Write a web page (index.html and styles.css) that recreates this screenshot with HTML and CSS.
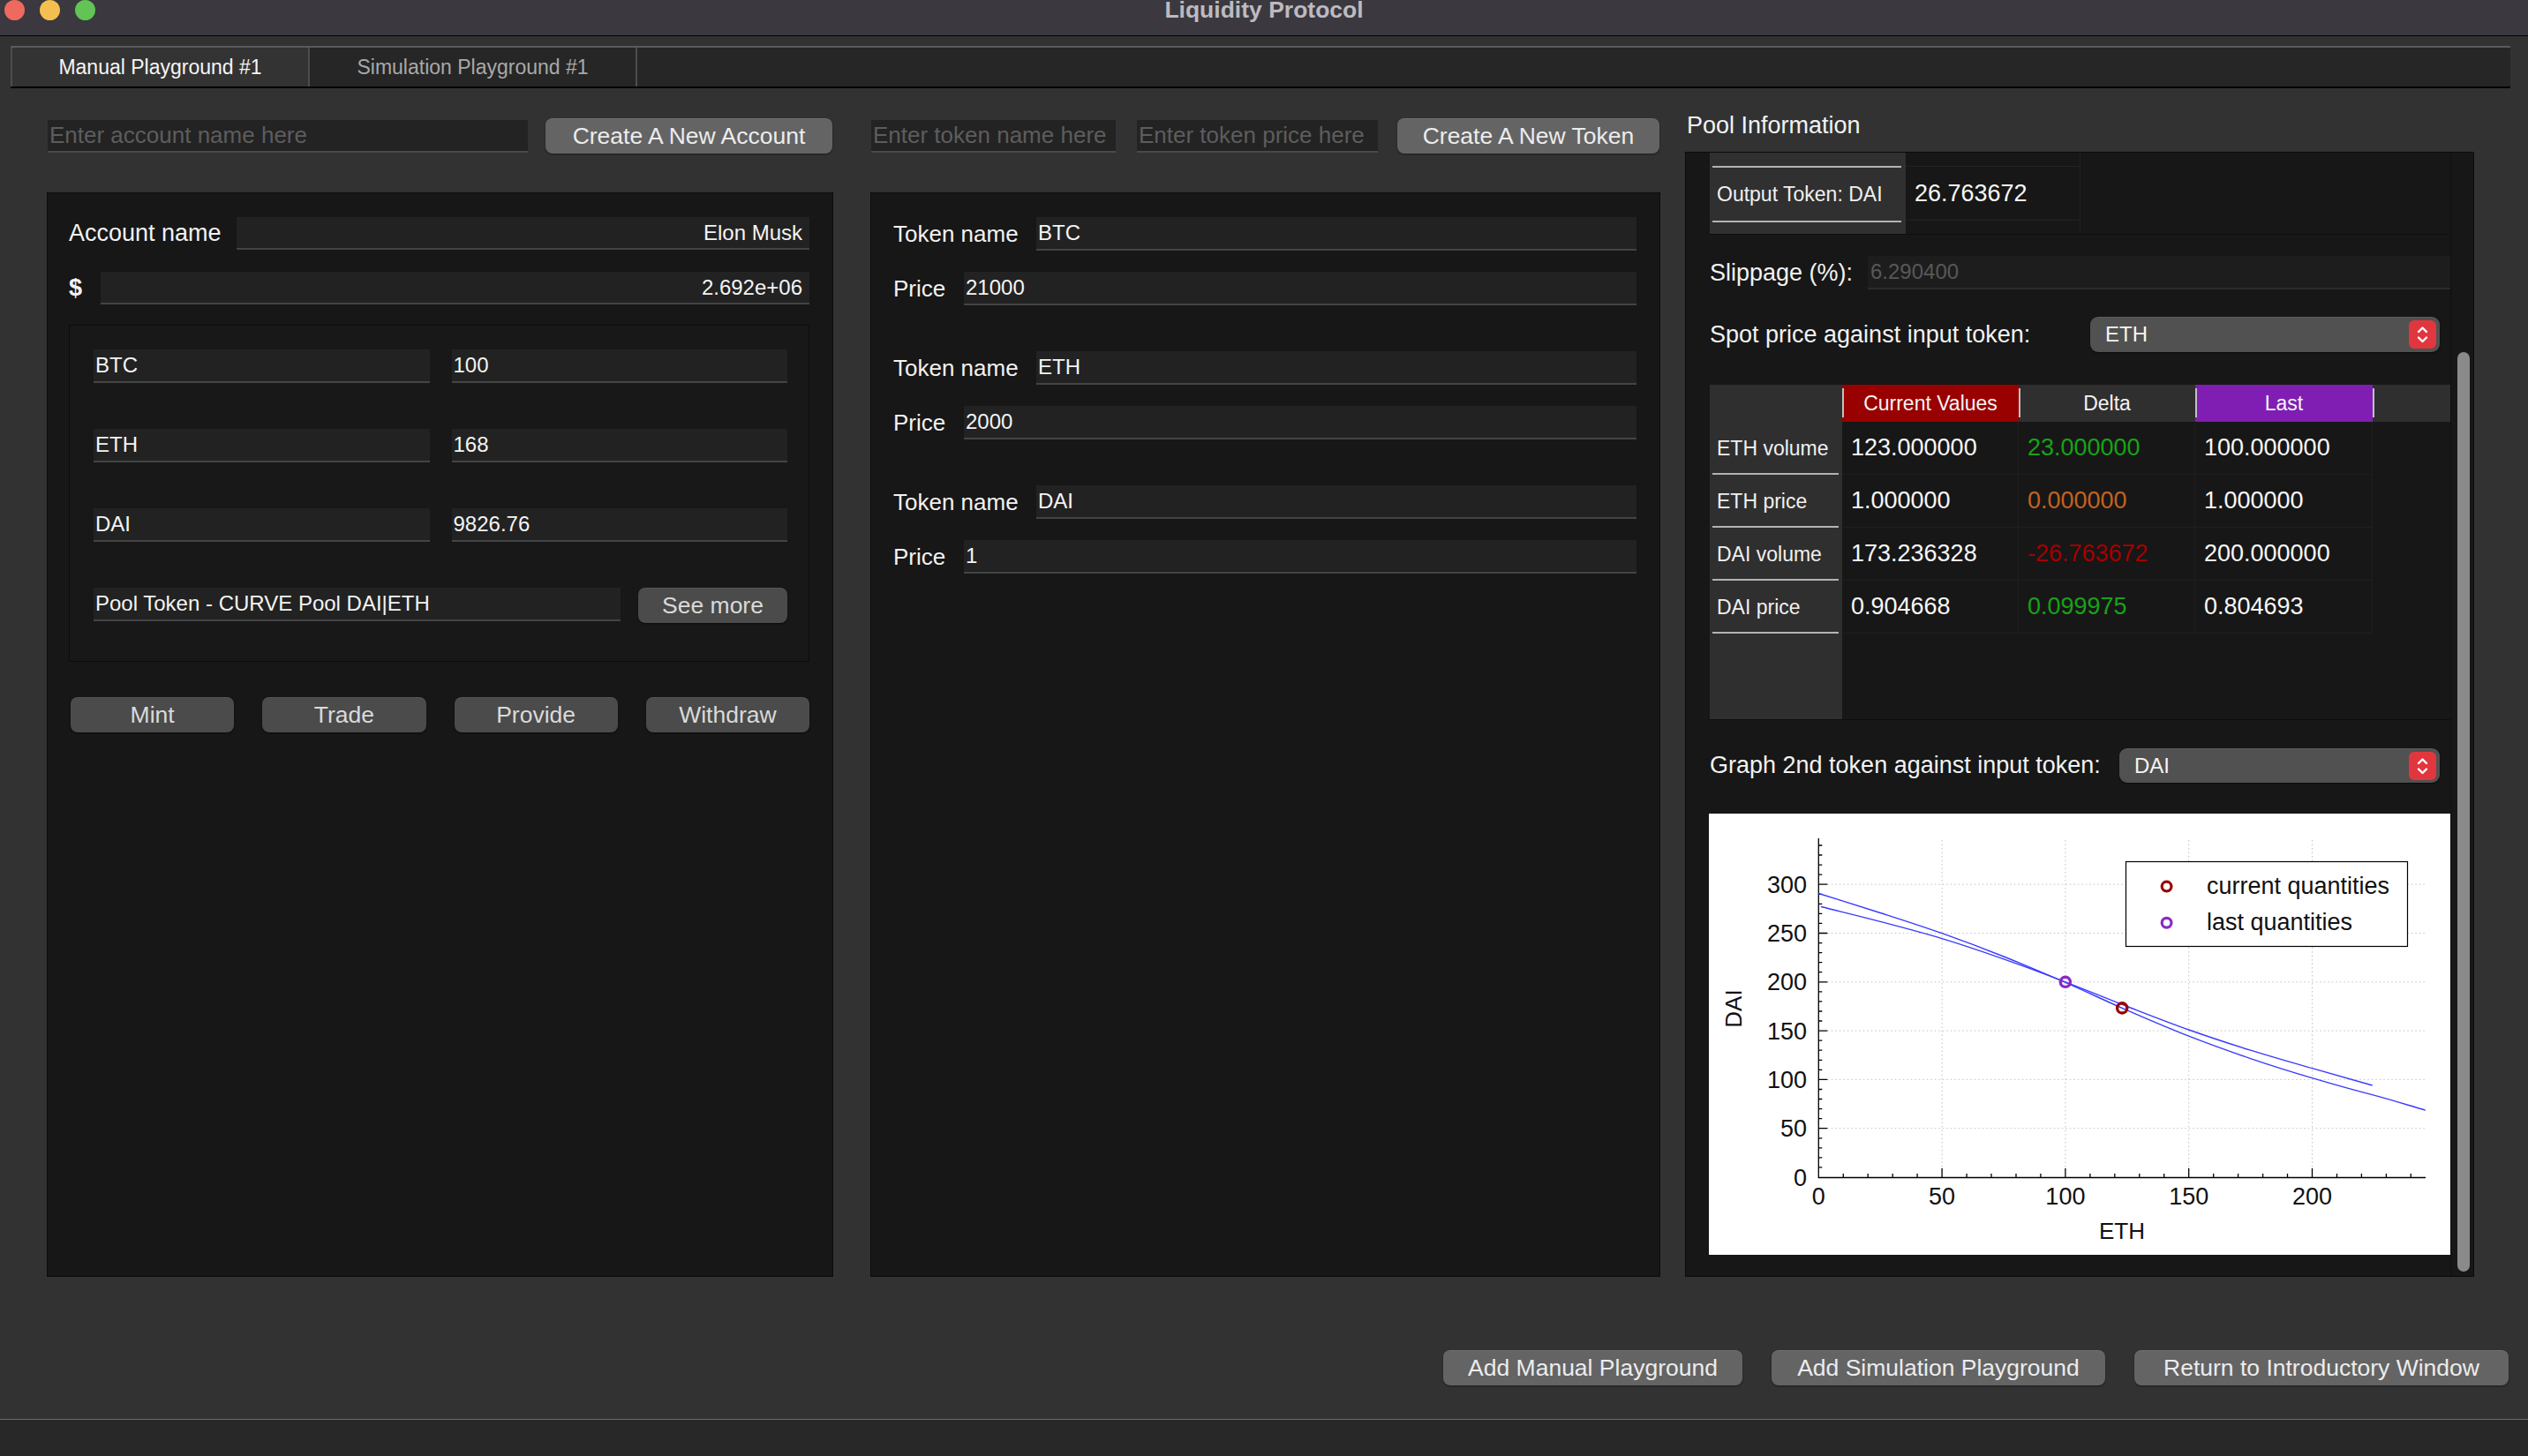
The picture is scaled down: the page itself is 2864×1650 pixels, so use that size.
FILE: index.html
```html
<!DOCTYPE html>
<html lang="en">
<head>
<meta charset="utf-8">
<title>Liquidity Protocol</title>
<link rel="stylesheet" href="styles.css">
</head>
<body>
<div class="window">
  <header class="titlebar">
    <div class="lights"><span class="light red"></span><span class="light yellow"></span><span class="light green"></span></div>
    <div class="title">Liquidity Protocol</div>
    <div class="title-spacer"></div>
  </header>

  <nav class="tabbar">
    <div class="tab tab-active">Manual Playground #1</div>
    <div class="tab tab-second">Simulation Playground #1</div>
  </nav>

  <main class="main">
    <section class="col col-left">
      <div class="toprow toprow-left">
        <div class="tfield w-account">Enter account name here</div>
        <button class="btn btn-light w-newacc">Create A New Account</button>
      </div>
      <div class="panel panel-left">
        <div class="frow">
          <span class="lbl lbl-account">Account name</span>
          <div class="field field-right">Elon Musk</div>
        </div>
        <div class="frow">
          <span class="lbl lbl-dollar">$</span>
          <div class="field field-right">2.692e+06</div>
        </div>
        <div class="group">
          <div class="grow"><div class="field">BTC</div><div class="field">100</div></div>
          <div class="grow"><div class="field">ETH</div><div class="field">168</div></div>
          <div class="grow"><div class="field">DAI</div><div class="field">9826.76</div></div>
          <div class="grow grow-pool"><div class="field">Pool Token - CURVE Pool DAI|ETH</div><button class="btn btn-dark">See more</button></div>
        </div>
        <div class="actions">
          <button class="btn btn-dark">Mint</button>
          <button class="btn btn-dark">Trade</button>
          <button class="btn btn-dark">Provide</button>
          <button class="btn btn-dark">Withdraw</button>
        </div>
      </div>
    </section>

    <section class="col col-mid">
      <div class="toprow toprow-mid">
        <div class="tfield w-tname">Enter token name here</div>
        <div class="tfield w-tprice">Enter token price here</div>
        <button class="btn btn-light w-newtok">Create A New Token</button>
      </div>
      <div class="panel panel-mid">
        <div class="tgroup">
          <div class="trow"><span class="lbl lbl-token">Token name</span><div class="field">BTC</div></div>
          <div class="trow trow-price"><span class="lbl lbl-price">Price</span><div class="field">21000</div></div>
        </div>
        <div class="tgroup">
          <div class="trow"><span class="lbl lbl-token">Token name</span><div class="field">ETH</div></div>
          <div class="trow trow-price"><span class="lbl lbl-price">Price</span><div class="field">2000</div></div>
        </div>
        <div class="tgroup">
          <div class="trow"><span class="lbl lbl-token">Token name</span><div class="field">DAI</div></div>
          <div class="trow trow-price"><span class="lbl lbl-price">Price</span><div class="field">1</div></div>
        </div>
      </div>
    </section>

    <section class="col col-right">
      <div class="pool-title">Pool Information</div>
      <div class="panel panel-right">
        <div class="viewport">
          <div class="otable">
            <div class="ovh">
              <div class="ovh-stub"></div>
              <div class="hline"></div>
              <div class="ovh-label">Output Token: DAI</div>
              <div class="hline"></div>
            </div>
            <div class="ocol">
              <div class="ocell-stub"></div>
              <div class="ocell">26.763672</div>
            </div>
            <div class="orest"></div>
          </div>

          <div class="prow prow-slip">
            <span class="lbl lbl-slip">Slippage (%):</span>
            <div class="field field-dim">6.290400</div>
          </div>

          <div class="prow prow-spot">
            <span class="lbl">Spot price against input token:</span>
            <div class="combo combo-spot">
              <span class="combo-text">ETH</span>
              <span class="stepper"><svg width="31" height="32" viewBox="0 0 31 32"><path d="M11 13l4.5-4.5L20 13M11 19.5l4.5 4.5L20 19.5" fill="none" stroke="#fff" stroke-width="2.4" stroke-linecap="round" stroke-linejoin="round"/></svg></span>
            </div>
          </div>

          <div class="vtable">
            <div class="vh vh-corner"></div>
            <div class="hc hc-red">Current Values</div>
            <div class="hc">Delta</div>
            <div class="hc hc-purple">Last</div>
            <div class="hc hc-filler"></div>

            <div class="vh vh-row">ETH volume</div>
            <div class="cell">123.000000</div>
            <div class="cell c-green">23.000000</div>
            <div class="cell">100.000000</div>
            <div class="empty"></div>

            <div class="vh vh-row">ETH price</div>
            <div class="cell">1.000000</div>
            <div class="cell c-orange">0.000000</div>
            <div class="cell">1.000000</div>
            <div class="empty"></div>

            <div class="vh vh-row">DAI volume</div>
            <div class="cell">173.236328</div>
            <div class="cell c-red">-26.763672</div>
            <div class="cell">200.000000</div>
            <div class="empty"></div>

            <div class="vh vh-row">DAI price</div>
            <div class="cell">0.904668</div>
            <div class="cell c-green">0.099975</div>
            <div class="cell">0.804693</div>
            <div class="empty"></div>

            <div class="vh vh-blank"></div>
            <div class="empty empty-wide"></div>
          </div>

          <div class="prow prow-graph">
            <span class="lbl">Graph 2nd token against input token:</span>
            <div class="combo combo-graph">
              <span class="combo-text">DAI</span>
              <span class="stepper"><svg width="31" height="32" viewBox="0 0 31 32"><path d="M11 13l4.5-4.5L20 13M11 19.5l4.5 4.5L20 19.5" fill="none" stroke="#fff" stroke-width="2.4" stroke-linecap="round" stroke-linejoin="round"/></svg></span>
            </div>
          </div>

          <div class="chart">
            <svg class="plot" width="842" height="500" viewBox="0 0 842 500">
              <rect width="842" height="500" fill="#ffffff"/>
              <g stroke="#c2c2c2" stroke-width="1" stroke-dasharray="1.5 3" fill="none">
                <path d="M264.1 30V402M403.9 30V402M543.7 30V402M683.5 30V402"/>
                <path d="M134.3 356.7H811M134.3 301.4H811M134.3 246.1H811M134.3 190.8H811M134.3 135.5H811M134.3 80.2H811"/>
              </g>
              <g stroke="#000" stroke-width="1.3" fill="none">
                <path d="M124.3 28V412.5H812"/>
                <path d="M124.3 400.9h4M124.3 389.9h4M124.3 378.8h4M124.3 367.8h4M124.3 345.6h4M124.3 334.6h4M124.3 323.5h4M124.3 312.5h4M124.3 290.3h4M124.3 279.3h4M124.3 268.2h4M124.3 257.2h4M124.3 235h4M124.3 224h4M124.3 212.9h4M124.3 201.9h4M124.3 179.7h4M124.3 168.7h4M124.3 157.6h4M124.3 146.6h4M124.3 124.4h4M124.3 113.4h4M124.3 102.3h4M124.3 91.3h4M124.3 69.1h4M124.3 58.1h4M124.3 47h4M124.3 36h4"/>
                <path d="M124.3 356.7h10M124.3 301.4h10M124.3 246.1h10M124.3 190.8h10M124.3 135.5h10M124.3 80.2h10"/>
                <path d="M152.3 412v-4M180.2 412v-4M208.2 412v-4M236.1 412v-4M292.1 412v-4M320 412v-4M348 412v-4M375.9 412v-4M431.9 412v-4M459.8 412v-4M487.8 412v-4M515.7 412v-4M571.7 412v-4M599.6 412v-4M627.6 412v-4M655.5 412v-4M711.5 412v-4M739.4 412v-4M767.4 412v-4M795.3 412v-4"/>
                <path d="M264.1 412v-10M403.9 412v-10M543.7 412v-10M683.5 412v-10"/>
              </g>
              <g stroke="#3b3bff" stroke-width="1.4" fill="none">
                <path d="M124.3 90.5C147.6 97.83 170.9 104.97 194.2 112.5C217.5 120.03 240.8 127.45 264.1 135.7C287.4 143.95 310.7 152.72 334 162C357.3 171.28 380.6 181.25 403.9 191.4C427.2 201.55 450.5 212.77 473.8 222.9C497.1 233.03 520.4 243.08 543.7 252.2C567 261.32 590.3 269.68 613.6 277.6C636.9 285.52 660.2 292.78 683.5 299.7C706.8 306.62 730.1 313.28 753.4 319.1C772.9 324.2 792.3 330.5 811.8 336.2"/>
                <path d="M127 105.5C149.6 111.2 170.9 116.27 194.2 122.4C217.5 128.53 240.8 134.53 264.1 141.6C287.4 148.67 310.7 156.6 334 164.8C357.3 173 380.6 181.85 403.9 190.8C427.2 199.75 450.5 209.47 473.8 218.5C497.1 227.53 520.4 236.72 543.7 245C567 253.28 590.3 260.92 613.6 268.2C636.9 275.48 660.2 282.07 683.5 288.7C706.2 295.33 729 301.57 751.7 308"/>
              </g>
              <circle cx="403.9" cy="190.8" r="5.6" fill="none" stroke="#8a2bc2" stroke-width="3.4"/>
              <circle cx="468.2" cy="220.4" r="5.6" fill="none" stroke="#9a0000" stroke-width="3.4"/>
              <g class="ticklbl" fill="#111" font-size="27">
                <text x="124.3" y="443" text-anchor="middle">0</text>
                <text x="264.1" y="443" text-anchor="middle">50</text>
                <text x="403.9" y="443" text-anchor="middle">100</text>
                <text x="543.7" y="443" text-anchor="middle">150</text>
                <text x="683.5" y="443" text-anchor="middle">200</text>
                <text x="111" y="421.5" text-anchor="end">0</text>
                <text x="111" y="366.2" text-anchor="end">50</text>
                <text x="111" y="310.9" text-anchor="end">100</text>
                <text x="111" y="255.6" text-anchor="end">150</text>
                <text x="111" y="200.3" text-anchor="end">200</text>
                <text x="111" y="145" text-anchor="end">250</text>
                <text x="111" y="89.7" text-anchor="end">300</text>
              </g>
              <text class="ticklbl" x="468" y="482" text-anchor="middle" font-size="26" fill="#111">ETH</text>
              <text class="ticklbl" transform="translate(37 221) rotate(-90)" text-anchor="middle" font-size="26" fill="#111">DAI</text>
              <rect x="472.5" y="54.5" width="319" height="96" fill="#fff" stroke="#000" stroke-width="1.2"/>
              <circle cx="518.6" cy="82.6" r="5.4" fill="none" stroke="#9a0000" stroke-width="3.2"/>
              <circle cx="518.6" cy="123.7" r="5.4" fill="none" stroke="#8a2bc2" stroke-width="3.2"/>
              <text class="ticklbl" x="564" y="91" font-size="27" fill="#111">current quantities</text>
              <text class="ticklbl" x="564" y="132" font-size="27" fill="#111">last quantities</text>
            </svg>
          </div>
        </div>
        <div class="vscroll"><div class="thumb"></div></div>
      </div>
    </section>
  </main>

  <footer class="footer">
    <button class="btn btn-light w-f1">Add Manual Playground</button>
    <button class="btn btn-light w-f2">Add Simulation Playground</button>
    <button class="btn btn-light w-f3">Return to Introductory Window</button>
  </footer>
  <div class="statusbar"></div>
</div>
</body>
</html>
```

FILE: styles.css
```css
* { box-sizing: border-box; margin: 0; padding: 0; }

html, body {
  width: 2864px;
  height: 1650px;
  overflow: hidden;
  background: #323232;
}

body {
  font-family: "Liberation Sans", Arial, sans-serif;
  color: #f1f1f1;
}

.window {
  width: 2864px;
  height: 1650px;
  display: flex;
  flex-direction: column;
  background: #323232;
}

/* ---------- title bar ---------- */
.titlebar {
  height: 41px;
  flex: none;
  background: #3b393f;
  border-bottom: 1px solid #000;
  display: grid;
  grid-template-columns: 1fr auto 1fr;
  align-items: start;
}
.lights { display: flex; gap: 17px; padding-left: 5px; }
.light { width: 23px; height: 23px; border-radius: 50%; display: block; }
.red { background: #ee6a5e; }
.yellow { background: #f5bf4f; }
.green { background: #61c454; }
.title {
  font-weight: 700;
  font-size: 26.5px;
  line-height: 26px;
  margin-top: -2px;
  color: #bdbac1;
  white-space: nowrap;
}

/* ---------- tabs ---------- */
.tabbar {
  flex: none;
  margin: 11px 20px 0 12px;
  height: 48px;
  background: #262626;
  border-top: 2px solid #5a5a5a;
  border-bottom: 2px solid #000;
  display: flex;
}
.tab {
  height: 44px;
  display: flex;
  align-items: center;
  justify-content: center;
  font-size: 23px;
  color: #a9a9a9;
  border-right: 2px solid #4d4d4d;
  white-space: nowrap;
}
.tab-active {
  width: 339px;
  background: #333333;
  color: #f5f5f5;
  border-left: 2px solid #4d4d4d;
}
.tab-second { width: 371px; }

/* ---------- main columns ---------- */
.main {
  flex: none;
  height: 1347px;
  display: flex;
  padding: 34px 0 0 53px;
}
.col { display: flex; flex-direction: column; }
.col-left { width: 891px; }
.col-mid { width: 895px; margin-left: 42px; }
.col-right { width: 894px; margin-left: 28px; }

.toprow { height: 40px; display: flex; align-items: center; flex: none; }
.toprow-left { gap: 20px; padding-left: 1px; }
.toprow-mid { padding-left: 1px; }

.tfield {
  height: 37px;
  background: #232323;
  border-bottom: 2px solid #4a4a4a;
  font-size: 26px;
  color: #5d5d5d;
  padding-left: 2px;
  display: flex;
  align-items: center;
  white-space: nowrap;
  overflow: hidden;
}
.w-account { width: 544px; }
.w-tname { width: 277px; }
.w-tprice { width: 273px; margin-left: 24px; }
.w-newacc { width: 325px; }
.w-newtok { width: 297px; margin-left: 22px; }

.btn {
  height: 40px;
  border: none;
  border-radius: 8px;
  font-family: "Liberation Sans", Arial, sans-serif;
  font-size: 26.5px;
  display: flex;
  align-items: center;
  justify-content: center;
  white-space: nowrap;
}
.btn-light {
  background: #646464;
  color: #ececec;
  box-shadow: 0 1px 2px rgba(0,0,0,0.45), inset 0 1px 0 rgba(255,255,255,0.08);
}
.btn-dark {
  background: #4b4b4b;
  color: #dadada;
  box-shadow: 0 1px 2px rgba(0,0,0,0.6), inset 0 1px 0 rgba(255,255,255,0.06);
}

.panel {
  flex: 1;
  background: #171717;
  border: 1px solid #0c0c0c;
}
.col-left .panel, .col-mid .panel { margin-top: 44px; }

.field {
  height: 37px;
  flex: 1;
  min-width: 0;
  background: #222222;
  border-bottom: 2px solid #444444;
  font-size: 24px;
  color: #f4f4f4;
  display: flex;
  align-items: center;
  padding: 0 2px;
  white-space: nowrap;
  overflow: hidden;
}
.field-right { justify-content: flex-end; padding-right: 8px; }
.field-dim { color: #585858; background: #1d1d1d; border-bottom-color: #2c2c2c; padding-left: 3px; }

.lbl { font-size: 27px; color: #f2f2f2; white-space: nowrap; flex: none; }

/* ---------- left panel ---------- */
.panel-left { padding: 27px 26px 0 24px; }
.frow { display: flex; align-items: center; gap: 19px; height: 37px; }
.frow + .frow { margin-top: 25px; }
.lbl-account { width: 171px; }
.lbl-dollar { width: 17px; font-weight: 700; }

.group {
  margin-top: 23px;
  height: 382px;
  background: #181818;
  border: 1px solid #0d0d0d;
  padding: 27px 24px 0 27px;
  display: flex;
  flex-direction: column;
  gap: 52px;
}
.grow {
  display: grid;
  grid-template-columns: 1fr 1fr;
  gap: 25px;
  height: 38px;
}
.grow .field { height: 38px; }
.grow-pool { grid-template-columns: 1fr 169px; gap: 20px; }
.grow-pool .btn { height: 40px; }

.actions {
  margin: 40px 0 0 2px;
  display: grid;
  grid-template-columns: repeat(4, 1fr);
  gap: 32px;
}

/* ---------- middle panel ---------- */
.panel-mid { padding: 27px 26px 0 25px; }
.tgroup + .tgroup { margin-top: 52px; }
.trow { display: flex; align-items: center; gap: 20px; height: 38px; }
.trow .field { height: 38px; }
.trow-price { margin-top: 24px; }
.lbl-token { width: 142px; font-size: 26px; }
.lbl-price { width: 60px; font-size: 26px; }

/* ---------- right panel ---------- */
.pool-title {
  font-size: 27px;
  line-height: 28px;
  height: 38px;
  margin: -6px 0 6px 2px;
  color: #f2f2f2;
  flex: none;
}
.panel-right { display: flex; overflow: hidden; }
.viewport {
  flex: 1;
  min-width: 0;
  padding-left: 27px;
  overflow: hidden;
  display: flex;
  flex-direction: column;
}
.vscroll { width: 26px; flex: none; border-left: 1px solid #0f0f0f; }
.thumb {
  width: 14px;
  height: 1042px;
  margin: 226px 0 0 7px;
  background: #8a8a8a;
  border-radius: 7px;
}

.otable {
  height: 93px;
  flex: none;
  display: flex;
  background: #171717;
  border-bottom: 1px solid #0e0e0e;
}
.ovh { width: 222px; background: #303030; }
.ovh-stub { height: 15px; }
.hline { height: 2px; margin: 0 5px 0 3px; background: #b3b3b3; }
.ovh-label {
  height: 60px;
  display: flex;
  align-items: center;
  padding-left: 8px;
  font-size: 23px;
  color: #f0f0f0;
  white-space: nowrap;
}
.ocol { width: 198px; border-right: 1px solid #212121; }
.ocell-stub { height: 16px; border-bottom: 1px solid #232323; }
.ocell {
  height: 61px;
  border-bottom: 1px solid #232323;
  display: flex;
  align-items: center;
  padding-left: 10px;
  font-size: 27px;
  color: #f7f7f7;
}
.orest { flex: 1; }

.prow { display: flex; align-items: center; flex: none; }
.prow-slip { margin-top: 24px; height: 38px; gap: 18px; }
.prow-slip .field { height: 38px; }
.lbl-slip { width: 161px; }
.prow-spot { margin-top: 31px; height: 40px; }
.prow-graph { margin-top: 32px; height: 39px; }

.combo {
  margin-left: auto;
  margin-right: 12px;
  height: 100%;
  background: #515151;
  border-radius: 9px;
  display: flex;
  align-items: center;
  padding-left: 17px;
  font-size: 24px;
  color: #f4f4f4;
  box-shadow: 0 1px 2px rgba(0,0,0,0.55), inset 0 1px 0 rgba(255,255,255,0.06);
}
.combo-spot { width: 396px; }
.combo-graph { width: 363px; }
.stepper {
  margin-left: auto;
  margin-right: 4px;
  width: 31px;
  height: 32px;
  border-radius: 6px;
  background: #e2363f;
  display: flex;
}

.vtable {
  margin-top: 37px;
  height: 380px;
  flex: none;
  display: grid;
  grid-template-columns: 150px 200px 200px 201px 1fr;
  grid-template-rows: 42px 60px 60px 60px 60px 1fr;
  background: #171717;
  border-bottom: 1px solid #0e0e0e;
}
.vh { background: #2f2f2f; position: relative; }
.vh-row {
  display: flex;
  align-items: center;
  padding-left: 8px;
  font-size: 23px;
  color: #f0f0f0;
  white-space: nowrap;
}
.vh-row::after {
  content: "";
  position: absolute;
  left: 3px;
  right: 4px;
  bottom: 0;
  height: 2px;
  background: #b3b3b3;
}
.hc {
  position: relative;
  background: #2f2f2f;
  display: flex;
  align-items: center;
  justify-content: center;
  font-size: 23px;
  color: #f4f4f4;
  white-space: nowrap;
}
.hc::before {
  content: "";
  position: absolute;
  left: 0;
  top: 4px;
  bottom: 5px;
  width: 2px;
  background: #c2c2c2;
}
.hc-red { background: #990000; }
.hc-purple { background: #801eb4; }
.cell {
  display: flex;
  align-items: center;
  padding-left: 10px;
  font-size: 27px;
  color: #f7f7f7;
  border-right: 1px solid #1f1f1f;
  border-bottom: 1px solid #1f1f1f;
  white-space: nowrap;
}
.c-green { color: #18a218; }
.c-orange { color: #c4621d; }
.c-red { color: #a30000; }
.empty-wide { grid-column: 2 / 6; }

.chart {
  margin-top: 35px;
  margin-left: -1px;
  width: 842px;
  height: 500px;
  flex: none;
}
.plot { display: block; }
.ticklbl { font-family: "Liberation Sans", Arial, sans-serif; }

/* ---------- footer ---------- */
.footer {
  flex: none;
  height: 161px;
  display: flex;
  justify-content: flex-end;
  align-items: flex-start;
  gap: 33px;
  padding: 83px 22px 0 0;
}
.w-f1 { width: 339px; }
.w-f2 { width: 378px; }
.w-f3 { width: 424px; }

.statusbar {
  flex: 1;
  border-top: 1px solid #6b6b6b;
  background: #282828;
}
```
